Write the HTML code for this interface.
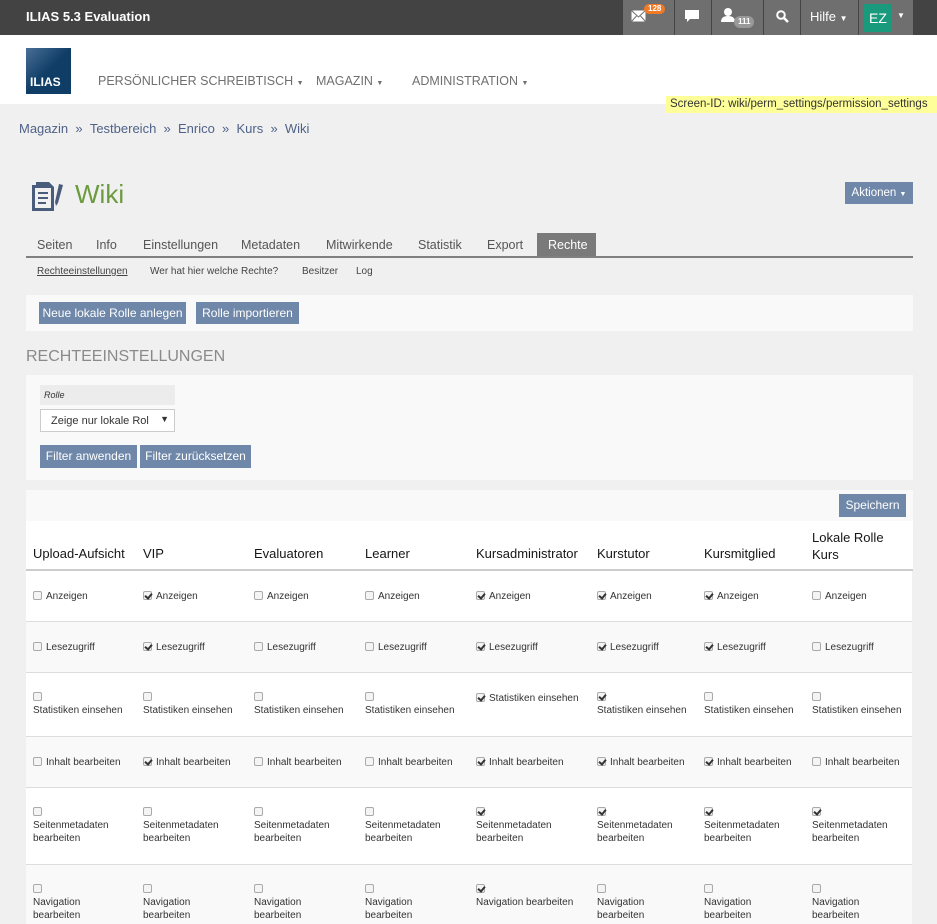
<!DOCTYPE html>
<html><head><meta charset="utf-8"><style>
*{margin:0;padding:0;box-sizing:border-box}
body{width:937px;height:923px;overflow:hidden;background:#f0f0f0;font-family:"Liberation Sans",sans-serif;color:#161616;position:relative}
.a{position:absolute;white-space:nowrap}
.btn{position:absolute;background:#6f87a8;color:#fff;font-size:12px;text-align:center;line-height:22px}
.c{position:absolute;font-size:10px;color:#333;line-height:13px;white-space:normal}
.cb{display:inline-block;width:9px;height:9px;border:1px solid #aaa;border-radius:2px;background:#f4f4f4;vertical-align:-1px;margin-right:4px;position:relative}
.cb.k::after{content:"";position:absolute;left:2px;top:0px;width:3px;height:5px;border:solid #333;border-width:0 2px 2px 0;transform:rotate(40deg)}
.row{position:absolute;left:26px;width:886px;border-top:1px solid #ddd}
.th{position:absolute;font-size:13px;color:#161616;top:546px}
.tab{position:absolute;top:238px;font-size:12.5px;color:#555}
</style></head><body>
<div class="a" style="left:0;top:0;width:937px;height:35px;background:#434343"></div>
<div class="a" style="left:26px;top:9px;color:#fff;font-weight:bold;font-size:13px">ILIAS 5.3 Evaluation</div>
<div class="a" style="left:623px;top:0;width:290px;height:35px;background:#6f6f6f"></div>
<div class="a" style="left:674px;top:0;width:1px;height:35px;background:#444"></div>
<div class="a" style="left:711px;top:0;width:1px;height:35px;background:#444"></div>
<div class="a" style="left:763px;top:0;width:1px;height:35px;background:#444"></div>
<div class="a" style="left:800px;top:0;width:1px;height:35px;background:#444"></div>
<div class="a" style="left:858px;top:0;width:1px;height:35px;background:#444"></div>
<svg class="a" style="left:631px;top:10px" width="15" height="12"><rect x="0.5" y="0.5" width="14" height="11" fill="#fff"/><path d="M0.5 0.5 L7.5 7 L14.5 0.5 M0.5 11.5L5.5 6 M14.5 11.5 L9.5 6" stroke="#6f6f6f" fill="none"/></svg>
<div class="a" style="left:644px;top:4px;background:#f07a26;color:#fff;font-size:8px;font-weight:bold;border-radius:7px;padding:0 4px;line-height:10px">128</div>
<svg class="a" style="left:685px;top:10px" width="14" height="13"><path d="M0 0H14V9H5L2 12V9H0Z" fill="#fff"/></svg>
<svg class="a" style="left:721px;top:8px" width="14" height="14"><circle cx="7" cy="4" r="4" fill="#fff"/><path d="M0 14 Q0 8 7 8 Q14 8 14 14Z" fill="#fff"/></svg>
<div class="a" style="left:734px;top:16px;background:#999;color:#fff;font-size:8px;font-weight:bold;border-radius:6px;padding:0 4px;line-height:12px">111</div>
<svg class="a" style="left:776px;top:10px" width="13" height="13"><circle cx="5" cy="5" r="3.8" stroke="#fff" stroke-width="2" fill="none"/><path d="M8 8 L12 12" stroke="#fff" stroke-width="2.5"/></svg>
<div class="a" style="left:810px;top:9px;color:#fff;font-size:13px">Hilfe <span style="font-size:8px">▼</span></div>
<div class="a" style="left:864px;top:4px;width:28px;height:28px;background:#1a9a7d;color:#fff;font-size:14px;text-align:center;line-height:28px">EZ</div>
<div class="a" style="left:897px;top:11px;color:#fff;font-size:8px">▼</div>
<div class="a" style="left:0;top:35px;width:937px;height:69px;background:#fff"></div>
<div class="a" style="left:26px;top:48px;width:45px;height:46px;background:linear-gradient(135deg,#4a6f96,#0f3d66 50%);color:#fff;font-weight:bold;font-size:12px;padding:27px 0 0 4px">ILIAS</div>
<div class="a" style="left:98px;top:74px;font-size:12.5px;color:#6f6f6f">PERSÖNLICHER SCHREIBTISCH <span style="font-size:7px">▼</span></div>
<div class="a" style="left:316px;top:74px;font-size:12.5px;color:#6f6f6f">MAGAZIN <span style="font-size:7px">▼</span></div>
<div class="a" style="left:412px;top:74px;font-size:12.5px;color:#6f6f6f">ADMINISTRATION <span style="font-size:7px">▼</span></div>
<div class="a" style="left:666px;top:96px;width:271px;height:17px;background:#ffff99;font-size:11.5px;color:#333;padding-left:4px;line-height:17px">Screen-ID: wiki/perm_settings/permission_settings</div>
<div class="a" style="left:19px;top:121px;font-size:13px;color:#4f6288">Magazin &nbsp;» &nbsp;Testbereich &nbsp;» &nbsp;Enrico &nbsp;» &nbsp;Kurs &nbsp;» &nbsp;Wiki</div>
<svg class="a" style="left:28px;top:180px" width="36" height="33"><path d="M4 5H8V2H21L26 7V31H4Z" fill="#4a5c7c"/><rect x="7" y="8" width="16" height="20" fill="#f0f0f0"/><rect x="10" y="12" width="10" height="2" fill="#4a5c7c"/><rect x="10" y="17" width="10" height="2" fill="#4a5c7c"/><rect x="10" y="22" width="8" height="2" fill="#4a5c7c"/><path d="M31 4 L35 5 L30 23 L28 26 L27 22Z" fill="#4a5c7c"/></svg>
<div class="a" style="left:75px;top:179px;font-size:26px;color:#6b9a3f">Wiki</div>
<div class="btn" style="left:845px;top:182px;width:68px;height:22px;font-size:11.5px">Aktionen <span style="font-size:7px">▼</span></div>
<div class="tab" style="left:37px">Seiten</div>
<div class="tab" style="left:96px">Info</div>
<div class="tab" style="left:143px">Einstellungen</div>
<div class="tab" style="left:241px">Metadaten</div>
<div class="tab" style="left:326px">Mitwirkende</div>
<div class="tab" style="left:418px">Statistik</div>
<div class="tab" style="left:487px">Export</div>
<div class="a" style="left:537px;top:233px;width:59px;height:24px;background:#7a7a7a"></div>
<div class="tab" style="left:548px;color:#fff">Rechte</div>
<div class="a" style="left:26px;top:256px;width:887px;height:2px;background:#7f7f7f"></div>
<div class="a" style="left:37px;top:266px;font-size:10px;color:#444;text-decoration:underline">Rechteeinstellungen</div>
<div class="a" style="left:150px;top:266px;font-size:10px;color:#444">Wer hat hier welche Rechte?</div>
<div class="a" style="left:302px;top:266px;font-size:10px;color:#444">Besitzer</div>
<div class="a" style="left:356px;top:266px;font-size:10px;color:#444">Log</div>
<div class="a" style="left:26px;top:295px;width:887px;height:36px;background:#f9f9f9"></div>
<div class="btn" style="left:39px;top:302px;width:147px">Neue lokale Rolle anlegen</div>
<div class="btn" style="left:196px;top:302px;width:103px">Rolle importieren</div>
<div class="a" style="left:26px;top:348px;font-size:16px;color:#8a8a8a">RECHTEEINSTELLUNGEN</div>
<div class="a" style="left:26px;top:375px;width:887px;height:105px;background:#f9f9f9"></div>
<div class="a" style="left:40px;top:385px;width:135px;height:20px;background:#ececec;font-size:9px;font-style:italic;color:#333;padding:5px 0 0 4px">Rolle</div>
<div class="a" style="left:40px;top:409px;width:135px;height:23px;background:#fff;border:1px solid #ccc;font-size:11px;color:#333;padding:5px 0 0 10px">Zeige nur lokale Rol<span style="position:absolute;right:5px;top:4px;font-size:9px">▼</span></div>
<div class="btn" style="left:40px;top:445px;width:97px;height:23px">Filter anwenden</div>
<div class="btn" style="left:140px;top:445px;width:111px;height:23px">Filter zurücksetzen</div>
<div class="a" style="left:26px;top:490px;width:887px;height:31px;background:#f9f9f9"></div>
<div class="btn" style="left:839px;top:494px;width:67px;height:23px">Speichern</div>
<div class="a" style="left:26px;top:521px;width:887px;height:49px;background:#fff"></div>
<div class="th" style="left:33px">Upload-Aufsicht</div>
<div class="th" style="left:143px">VIP</div>
<div class="th" style="left:254px">Evaluatoren</div>
<div class="th" style="left:365px">Learner</div>
<div class="th" style="left:476px">Kursadministrator</div>
<div class="th" style="left:597px">Kurstutor</div>
<div class="th" style="left:704px">Kursmitglied</div>
<div class="th" style="left:812px;top:529px;line-height:17px">Lokale Rolle<br>Kurs</div>
<div class="a" style="left:26px;top:569px;width:887px;height:2px;background:#ccc"></div>
<div class="row" style="top:571px;height:51px;background:#fff;border-top:0"></div>
<div class="row" style="top:621px;height:51px;background:#f9f9f9"></div>
<div class="row" style="top:672px;height:64px;background:#fff"></div>
<div class="row" style="top:736px;height:51px;background:#f9f9f9"></div>
<div class="row" style="top:787px;height:77px;background:#fff"></div>
<div class="row" style="top:864px;height:60px;background:#f9f9f9"></div>
<div class="c" style="left:33px;top:590px"><i class="cb"></i>Anzeigen</div>
<div class="c" style="left:143px;top:590px"><i class="cb k"></i>Anzeigen</div>
<div class="c" style="left:254px;top:590px"><i class="cb"></i>Anzeigen</div>
<div class="c" style="left:365px;top:590px"><i class="cb"></i>Anzeigen</div>
<div class="c" style="left:476px;top:590px"><i class="cb k"></i>Anzeigen</div>
<div class="c" style="left:597px;top:590px"><i class="cb k"></i>Anzeigen</div>
<div class="c" style="left:704px;top:590px"><i class="cb k"></i>Anzeigen</div>
<div class="c" style="left:812px;top:590px"><i class="cb"></i>Anzeigen</div>
<div class="c" style="left:33px;top:641px"><i class="cb"></i>Lesezugriff</div>
<div class="c" style="left:143px;top:641px"><i class="cb k"></i>Lesezugriff</div>
<div class="c" style="left:254px;top:641px"><i class="cb"></i>Lesezugriff</div>
<div class="c" style="left:365px;top:641px"><i class="cb"></i>Lesezugriff</div>
<div class="c" style="left:476px;top:641px"><i class="cb k"></i>Lesezugriff</div>
<div class="c" style="left:597px;top:641px"><i class="cb k"></i>Lesezugriff</div>
<div class="c" style="left:704px;top:641px"><i class="cb k"></i>Lesezugriff</div>
<div class="c" style="left:812px;top:641px"><i class="cb"></i>Lesezugriff</div>
<div class="c" style="left:33px;top:691px"><i class="cb"></i><br>Statistiken einsehen</div>
<div class="c" style="left:143px;top:691px"><i class="cb"></i><br>Statistiken einsehen</div>
<div class="c" style="left:254px;top:691px"><i class="cb"></i><br>Statistiken einsehen</div>
<div class="c" style="left:365px;top:691px"><i class="cb"></i><br>Statistiken einsehen</div>
<div class="c" style="left:476px;top:692px"><i class="cb k"></i>Statistiken einsehen</div>
<div class="c" style="left:597px;top:691px"><i class="cb k"></i><br>Statistiken einsehen</div>
<div class="c" style="left:704px;top:691px"><i class="cb"></i><br>Statistiken einsehen</div>
<div class="c" style="left:812px;top:691px"><i class="cb"></i><br>Statistiken einsehen</div>
<div class="c" style="left:33px;top:756px"><i class="cb"></i>Inhalt bearbeiten</div>
<div class="c" style="left:143px;top:756px"><i class="cb k"></i>Inhalt bearbeiten</div>
<div class="c" style="left:254px;top:756px"><i class="cb"></i>Inhalt bearbeiten</div>
<div class="c" style="left:365px;top:756px"><i class="cb"></i>Inhalt bearbeiten</div>
<div class="c" style="left:476px;top:756px"><i class="cb k"></i>Inhalt bearbeiten</div>
<div class="c" style="left:597px;top:756px"><i class="cb k"></i>Inhalt bearbeiten</div>
<div class="c" style="left:704px;top:756px"><i class="cb k"></i>Inhalt bearbeiten</div>
<div class="c" style="left:812px;top:756px"><i class="cb"></i>Inhalt bearbeiten</div>
<div class="c" style="left:33px;top:806px"><i class="cb"></i><br>Seitenmetadaten<br>bearbeiten</div>
<div class="c" style="left:143px;top:806px"><i class="cb"></i><br>Seitenmetadaten<br>bearbeiten</div>
<div class="c" style="left:254px;top:806px"><i class="cb"></i><br>Seitenmetadaten<br>bearbeiten</div>
<div class="c" style="left:365px;top:806px"><i class="cb"></i><br>Seitenmetadaten<br>bearbeiten</div>
<div class="c" style="left:476px;top:806px"><i class="cb k"></i><br>Seitenmetadaten<br>bearbeiten</div>
<div class="c" style="left:597px;top:806px"><i class="cb k"></i><br>Seitenmetadaten<br>bearbeiten</div>
<div class="c" style="left:704px;top:806px"><i class="cb k"></i><br>Seitenmetadaten<br>bearbeiten</div>
<div class="c" style="left:812px;top:806px"><i class="cb k"></i><br>Seitenmetadaten<br>bearbeiten</div>
<div class="c" style="left:33px;top:883px"><i class="cb"></i><br>Navigation<br>bearbeiten</div>
<div class="c" style="left:143px;top:883px"><i class="cb"></i><br>Navigation<br>bearbeiten</div>
<div class="c" style="left:254px;top:883px"><i class="cb"></i><br>Navigation<br>bearbeiten</div>
<div class="c" style="left:365px;top:883px"><i class="cb"></i><br>Navigation<br>bearbeiten</div>
<div class="c" style="left:476px;top:883px"><i class="cb k"></i><br>Navigation bearbeiten</div>
<div class="c" style="left:597px;top:883px"><i class="cb"></i><br>Navigation<br>bearbeiten</div>
<div class="c" style="left:704px;top:883px"><i class="cb"></i><br>Navigation<br>bearbeiten</div>
<div class="c" style="left:812px;top:883px"><i class="cb"></i><br>Navigation<br>bearbeiten</div>
</body></html>
